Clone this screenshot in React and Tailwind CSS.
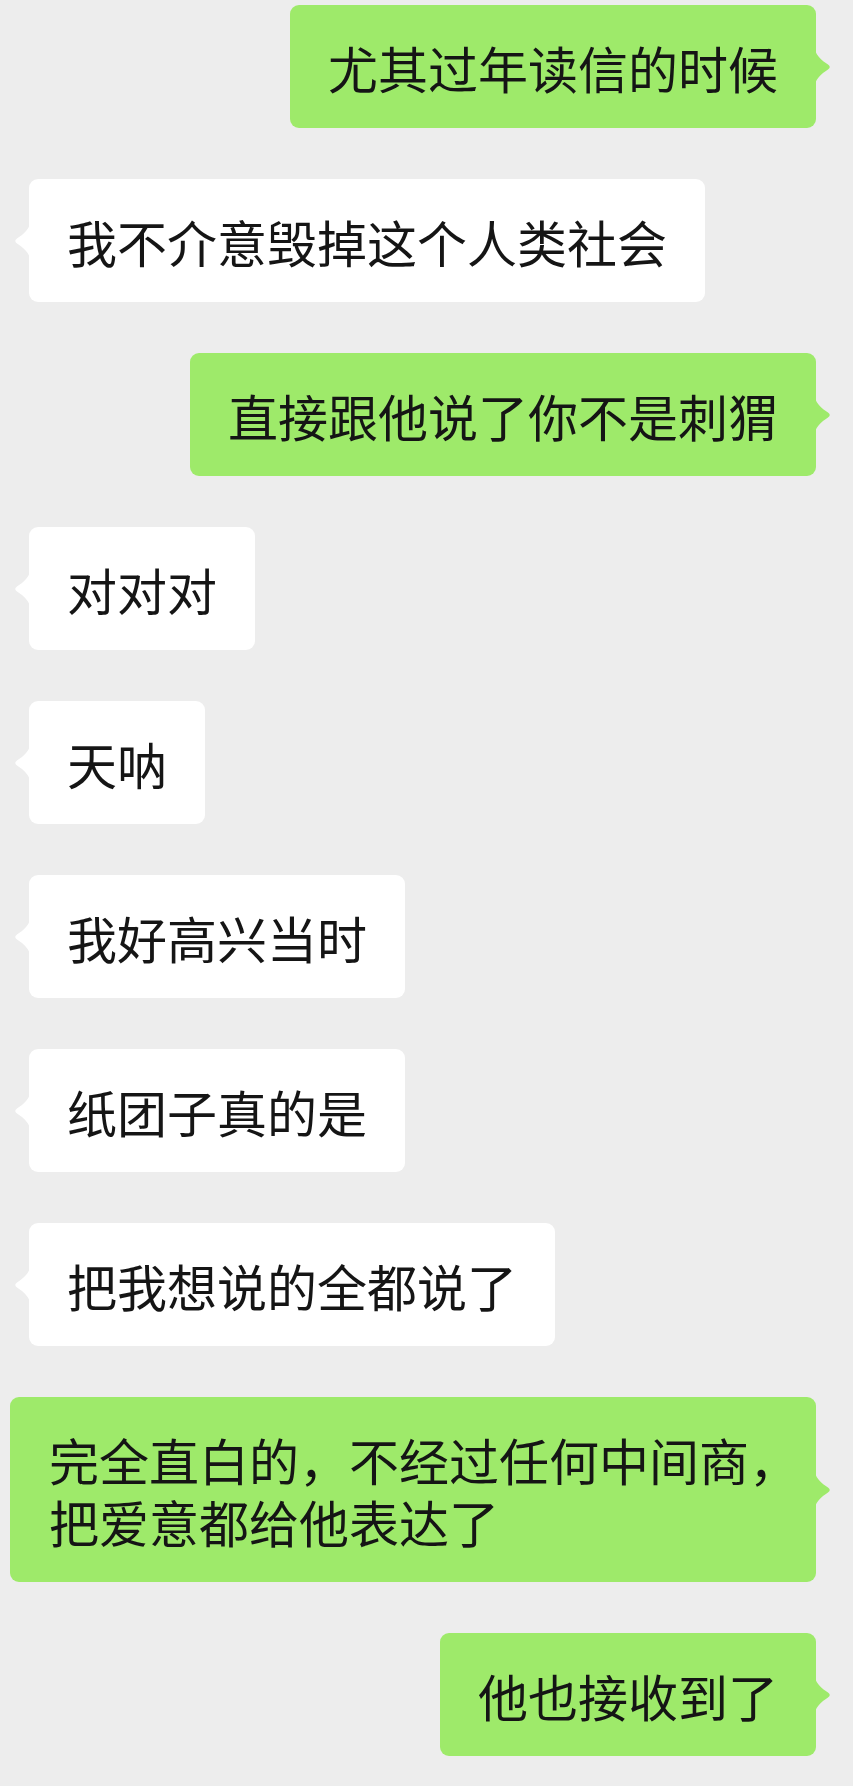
import React from 'react';

const messages = [
  { me: true, lines: ['尤其过年读信的时候'] },
  { me: false, lines: ['我不介意毁掉这个人类社会'] },
  { me: true, lines: ['直接跟他说了你不是刺猬'] },
  { me: false, lines: ['对对对'] },
  { me: false, lines: ['天呐'] },
  { me: false, lines: ['我好高兴当时'] },
  { me: false, lines: ['纸团子真的是'] },
  { me: false, lines: ['把我想说的全都说了'] },
  { me: true, lines: ['完全直白的，不经过任何中间商，', '把爱意都给他表达了'], wide: true },
  { me: true, lines: ['他也接收到了'] },
];

function Tail({ me }) {
  // small curved pointer on the bubble side
  const fill = me ? '#9EEA6A' : '#FFFFFF';
  return (
    <svg
      width="17"
      height="34"
      viewBox="0 0 17 34"
      className={me ? 'absolute top-1/2 -translate-y-1/2 -right-[16px]' : 'absolute top-1/2 -translate-y-1/2 -left-[16px] -scale-x-100'}
    >
      <path d="M0 0 C2 6 6 10 13 14.5 Q16.5 17 13 19.5 C6 24 2 28 0 34 Z" fill={fill} />
    </svg>
  );
}

function Bubble({ msg }) {
  const color = msg.me ? 'bg-[#9EEA6A]' : 'bg-white';
  return (
    <div className={msg.me ? 'flex justify-end pr-[37px]' : 'flex justify-start pl-[29px]'}>
      <div
        className={`relative rounded-[9px] py-[30.5px] text-[50px] leading-[62px] text-[#151515] ${color} ${
          msg.wide ? 'w-[806px] pl-[39px] pr-[20px]' : 'px-[38px]'
        }`}
        style={{ fontFamily: '"Noto Sans CJK SC", "Noto Sans", sans-serif' }}
      >
        {msg.lines.map((line, i) => (
          <div key={i} className="whitespace-nowrap">{line}</div>
        ))}
        <Tail me={msg.me} />
      </div>
    </div>
  );
}

export default function App() {
  return (
    <div className="min-h-screen w-[853px] bg-[#EDEDED] pt-[5px] pb-[29px] flex flex-col gap-[51px]">
      {messages.map((m, i) => (
        <Bubble key={i} msg={m} />
      ))}
    </div>
  );
}
